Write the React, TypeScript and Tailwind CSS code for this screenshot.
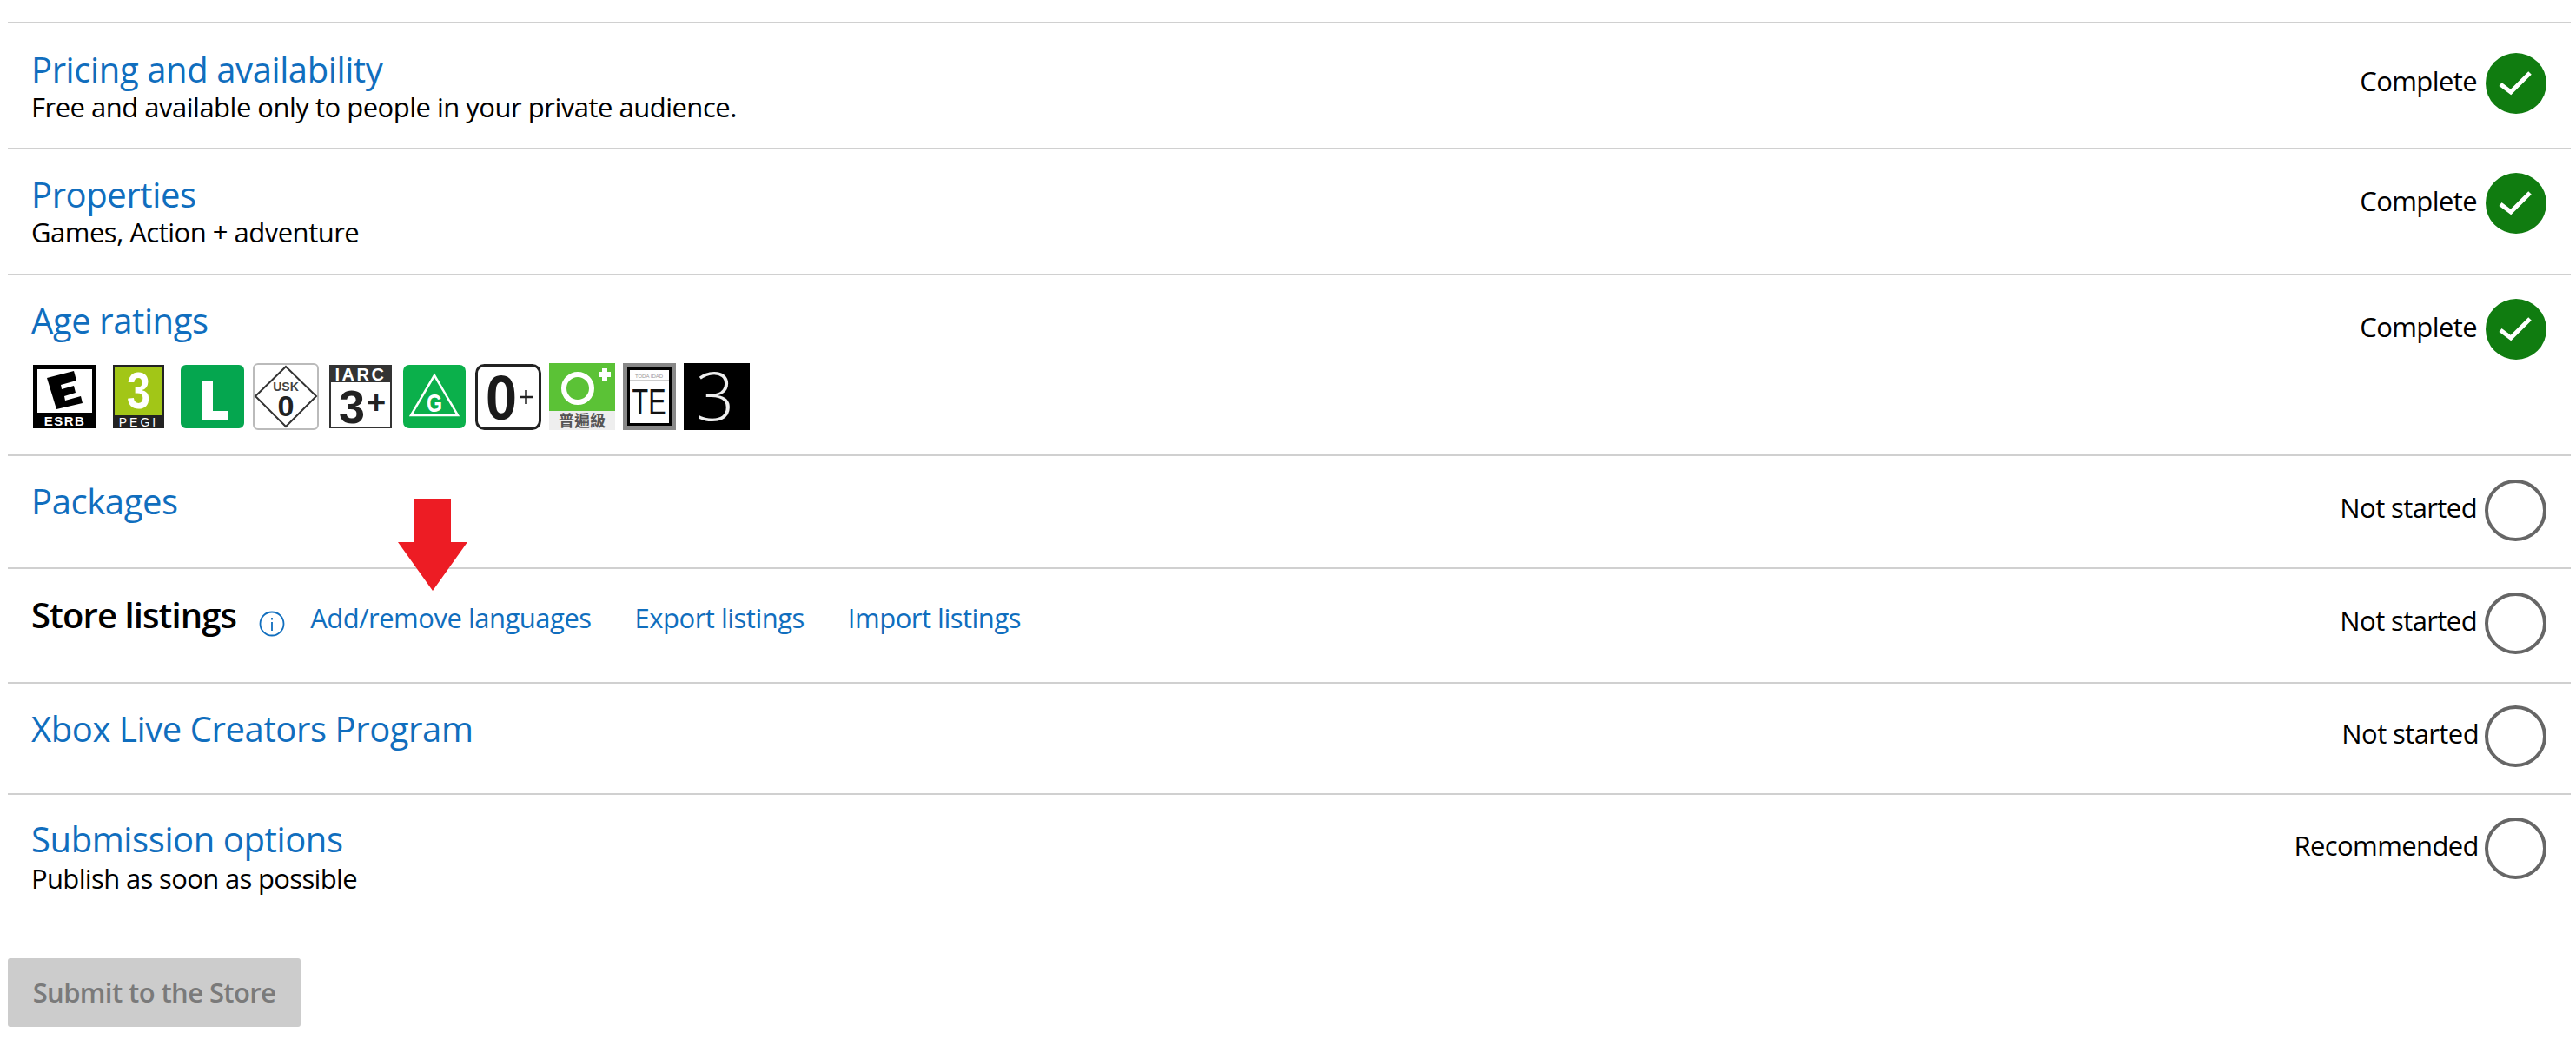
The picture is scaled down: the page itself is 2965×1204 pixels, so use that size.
import React from "react";

function Check() {
  return (
    <svg viewBox="0 0 70 70" className="w-[70px] h-[70px] shrink-0">
      <circle cx="35" cy="35" r="35" fill="#107c10" />
      <path d="M17 36 L29 45 L51 23" fill="none" stroke="#fff" strokeWidth="5" />
    </svg>
  );
}
function Empty() {
  return <div className="w-[71px] h-[71px] shrink-0 rounded-full border-[4px] border-[#666]" />;
}
function Status({ label, done, mt, gap }: { label: string; done?: boolean; mt: string; gap: string }) {
  return (
    <div className={`flex items-start mr-[28px] ${gap} ${mt}`}>
      <span className="text-[31px] leading-[42px] mt-[11px] tracking-[-0.6px] text-black">{label}</span>
      {done ? <Check /> : <Empty />}
    </div>
  );
}
const title = "text-[40px] leading-[52px] text-[#106ebe] font-medium tracking-[-0.4px]";
const sub = "text-[31px] leading-[42px] text-black tracking-[-0.5px]";

function Esrb() {
  return (
    <svg viewBox="0 0 73 73" className="w-[73px] h-[73px] overflow-visible">
      <rect width="73" height="73" fill="#000" />
      <rect x="5" y="5" width="63" height="50" fill="#fff" />
      <path d="M16 15 L47 7 L50 18 L32 23 L33 28 L47 24 L49 32 L36 36 L37 41 L55 36 L57 44 L27 51 Z" fill="#000" />
      <text x="36.5" y="70" textAnchor="middle" fontSize="15" fontWeight="700" fill="#fff" letterSpacing="1.5" fontFamily="Liberation Sans">ESRB</text>
    </svg>
  );
}
function Pegi() {
  return (
    <svg viewBox="0 0 59 73" className="w-[59px] h-[73px] overflow-visible">
      <rect width="59" height="73" fill="#222" />
      <rect x="2" y="3" width="55" height="55" fill="#a2c617" />
      <text x="29.5" y="50" textAnchor="middle" fontSize="60" fontWeight="700" fill="#fff" fontFamily="Liberation Sans" textLength="27" lengthAdjust="spacingAndGlyphs">3</text>
      <text x="29.5" y="71" textAnchor="middle" fontSize="14" fill="#fff" letterSpacing="3" fontFamily="Liberation Sans">PEGI</text>
    </svg>
  );
}
function L() {
  return (
    <svg viewBox="0 0 73 73" className="w-[73px] h-[73px]">
      <rect width="73" height="73" rx="6" fill="#05a64f" />
      <path d="M25 18 H37 V53 H54 V64 H25 Z" fill="#fff" />
    </svg>
  );
}
function Usk() {
  return (
    <svg viewBox="0 0 76 77" className="w-[76px] h-[77px] overflow-visible">
      <rect x="1" y="1" width="74" height="75" rx="5" fill="#fff" stroke="#bbb" strokeWidth="2" />
      <path d="M38 4 L73 38 L38 73 L3 38 Z" fill="none" stroke="#333" strokeWidth="2" />
      <text x="38" y="32" textAnchor="middle" fontSize="14" fontWeight="700" fill="#444" fontFamily="Liberation Sans">USK</text>
      <text x="38" y="61" textAnchor="middle" fontSize="33" fontWeight="700" fill="#222" fontFamily="Liberation Sans" textLength="19" lengthAdjust="spacingAndGlyphs">0</text>
    </svg>
  );
}
function Iarc() {
  return (
    <svg viewBox="0 0 72 73" className="w-[72px] h-[73px] overflow-visible">
      <rect x="1" y="1" width="70" height="71" fill="#fff" stroke="#333" strokeWidth="2" />
      <rect width="72" height="20" fill="#333" />
      <text x="36" y="18" textAnchor="middle" fontSize="20" fontWeight="700" fill="#fff" letterSpacing="2.5" fontFamily="Liberation Sans">IARC</text>
      <text x="26" y="67" textAnchor="middle" fontSize="54" fontWeight="700" fill="#222" fontFamily="Liberation Sans">3</text>
      <text x="54" y="56" textAnchor="middle" fontSize="38" fontWeight="700" fill="#222" fontFamily="Liberation Sans">+</text>
    </svg>
  );
}
function G() {
  return (
    <svg viewBox="0 0 72 73" className="w-[72px] h-[73px] overflow-visible">
      <rect width="72" height="73" rx="7" fill="#0bb04b" />
      <path d="M36 12 L63 58 H9 Z" fill="none" stroke="#fff" strokeWidth="2.5" />
      <text x="36" y="54" textAnchor="middle" fontSize="30" fontWeight="700" fill="#fff" fontFamily="Liberation Sans" textLength="18" lengthAdjust="spacingAndGlyphs">G</text>
    </svg>
  );
}
function ZeroPlus() {
  return (
    <svg viewBox="0 0 76 76" className="w-[76px] h-[76px] overflow-visible">
      <rect x="1.5" y="1.5" width="73" height="73" rx="9" fill="#fff" stroke="#222" strokeWidth="3" />
      <text x="30" y="64" textAnchor="middle" fontSize="72" fontWeight="700" fill="#1a1a1a" textLength="36" lengthAdjust="spacingAndGlyphs" fontFamily="Liberation Sans">0</text>
      <path d="M51 38 H66 M58.5 30 V46" stroke="#222" strokeWidth="2.5" />
    </svg>
  );
}
function Fuji() {
  return (
    <svg viewBox="0 0 76 77" className="w-[76px] h-[77px] overflow-visible">
      <rect width="76" height="55" fill="#5bc236" />
      <rect y="55" width="76" height="22" fill="#eee" />
      <circle cx="33" cy="29" r="16" fill="none" stroke="#fff" strokeWidth="6" />
      <path d="M64 6 V20 M57 13 H71" stroke="#fff" strokeWidth="6" />
      <text x="38" y="73" textAnchor="middle" fontSize="18" fontWeight="700" fill="#555" fontFamily="Noto Sans CJK TC">普遍級</text>
    </svg>
  );
}
function Te() {
  return (
    <svg viewBox="0 0 61 77" className="w-[61px] h-[77px] overflow-visible">
      <rect width="61" height="77" fill="#888" />
      <rect x="5" y="5" width="51" height="67" fill="#000" />
      <rect x="8" y="8" width="45" height="61" fill="#fff" />
      <text x="30" y="17" textAnchor="middle" fontSize="6" fill="#999" fontFamily="Liberation Sans">TODA IDAD</text>
      <rect x="8" y="19" width="45" height="1" fill="#ccc" />
      <text x="30" y="59" textAnchor="middle" fontSize="42" fill="#111" textLength="39" lengthAdjust="spacingAndGlyphs" fontFamily="Liberation Sans">TE</text>
    </svg>
  );
}
function Three() {
  return (
    <svg viewBox="0 0 76 77" className="w-[76px] h-[77px] overflow-visible">
      <rect width="76" height="77" fill="#000" />
      <text x="36" y="66" textAnchor="middle" fontSize="78" fill="#eee" fontFamily="Open Sans" fontWeight="300">3</text>
    </svg>
  );
}

export default function App() {
  return (
    <div className="w-[2965px] h-[1204px] bg-white overflow-hidden pt-[25px] pl-[9px] font-['Open_Sans',sans-serif] relative">
      <div className="w-[2950px] border-t-2 border-[#d0d0d0] h-[145px] flex justify-between">
        <div className="pl-[27px] pt-[27px]">
          <div className={title}>Pricing and availability</div>
          <div className={`${sub} -mt-[4px]`}>Free and available only to people in your private audience.</div>
        </div>
        <Status label="Complete" done mt="mt-[34px]" gap="gap-[10px]" />
      </div>
      <div className="w-[2950px] border-t-2 border-[#d0d0d0] h-[145px] flex justify-between">
        <div className="pl-[27px] pt-[26px]">
          <div className={title}>Properties</div>
          <div className={`${sub} -mt-[4px]`}>Games, Action + adventure</div>
        </div>
        <Status label="Complete" done mt="mt-[27px]" gap="gap-[10px]" />
      </div>
      <div className="w-[2950px] border-t-2 border-[#d0d0d0] h-[208px] flex justify-between">
        <div className="pl-[27px] pt-[26px]">
          <div className={title}>Age ratings</div>
          <div className="flex items-center mt-[23px] ml-[2px]">
            <Esrb />
            <div className="ml-[19px]"><Pegi /></div>
            <div className="ml-[19px]"><L /></div>
            <div className="ml-[10px]"><Usk /></div>
            <div className="ml-[12px]"><Iarc /></div>
            <div className="ml-[13px]"><G /></div>
            <div className="ml-[11px]"><ZeroPlus /></div>
            <div className="ml-[9px]"><Fuji /></div>
            <div className="ml-[9px]"><Te /></div>
            <div className="ml-[9px]"><Three /></div>
          </div>
        </div>
        <Status label="Complete" done mt="mt-[27px]" gap="gap-[10px]" />
      </div>
      <div className="w-[2950px] border-t-2 border-[#d0d0d0] h-[130px] flex justify-between">
        <div className="pl-[27px] pt-[26px]">
          <div className={title}>Packages</div>
        </div>
        <Status label="Not started" mt="mt-[27px]" gap="gap-[9px]" />
      </div>
      <div className="w-[2950px] border-t-2 border-[#d0d0d0] h-[132px] flex justify-between">
        <div className="pl-[27px] pt-[27px] flex items-start">
          <div className="text-[40px] leading-[52px] text-black font-semibold tracking-[-0.9px]">Store listings</div>
          <svg viewBox="0 0 30 30" className="w-[30px] h-[30px] ml-[26px] mt-[21px]">
            <circle cx="15" cy="15" r="13.5" fill="none" stroke="#106ebe" strokeWidth="1.8" />
            <path d="M15 13 V23 M15 8 V10.5" stroke="#106ebe" strokeWidth="1.8" />
          </svg>
          <div className="ml-[29px] mt-[8px] text-[31px] leading-[42px] text-[#106ebe] tracking-[-0.5px] flex gap-[50px]">
            <span>Add/remove languages</span>
            <span>Export listings</span>
            <span>Import listings</span>
          </div>
        </div>
        <Status label="Not started" mt="mt-[27px]" gap="gap-[9px]" />
      </div>
      <div className="w-[2950px] border-t-2 border-[#d0d0d0] h-[128px] flex justify-between">
        <div className="pl-[27px] pt-[26px]">
          <div className={title}>Xbox Live Creators Program</div>
        </div>
        <Status label="Not started" mt="mt-[25px]" gap="gap-[7px]" />
      </div>
      <div className="w-[2950px] border-t-2 border-[#d0d0d0] h-[190px] flex justify-between">
        <div className="pl-[27px] pt-[25px]">
          <div className={title}>Submission options</div>
          <div className={`${sub} -mt-[2px] tracking-[-0.65px]`}>Publish as soon as possible</div>
        </div>
        <Status label="Recommended" mt="mt-[26px]" gap="gap-[7px]" />
      </div>
      <div className="w-[337px] h-[79px] bg-[#cccccc] rounded-[3px] flex items-center justify-center text-[31px] font-semibold text-[#7a7a7a] tracking-[-0.6px]">
        Submit to the Store
      </div>
      <svg viewBox="0 0 80 106" className="absolute left-[458px] top-[574px] w-[80px] h-[106px]">
        <path d="M19 0 H61 V50 H80 L40 106 L0 50 H19 Z" fill="#ed1c24" />
      </svg>
    </div>
  );
}
